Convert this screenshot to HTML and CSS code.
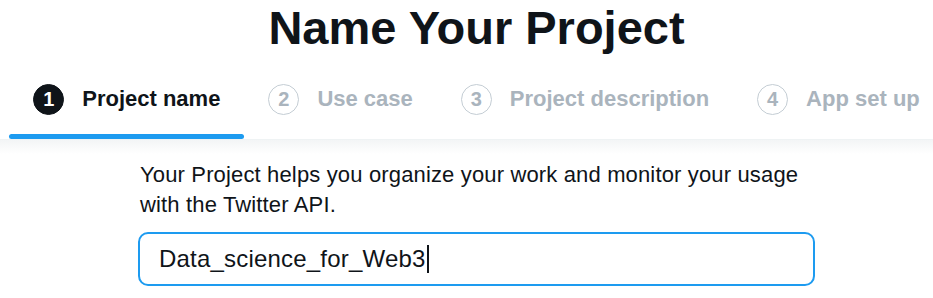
FILE: index.html
```html
<!DOCTYPE html>
<html lang="en">
<head>
  <meta charset="UTF-8" />
  <meta name="viewport" content="width=device-width, initial-scale=1.0" />
  <title>Name Your Project</title>
  <link rel="stylesheet" href="styles.css">
</head>
<body>
  <div class="page">
    <h1>Name Your Project</h1>

    <div class="steps">
      <div class="step active">
        <div class="step-label"><span class="step-num">1</span>Project name</div>
        <div class="step-bar"></div>
      </div>
      <div class="step">
        <div class="step-label"><span class="step-num">2</span>Use case</div>
        <div class="step-bar"></div>
      </div>
      <div class="step">
        <div class="step-label"><span class="step-num">3</span>Project description</div>
        <div class="step-bar"></div>
      </div>
      <div class="step">
        <div class="step-label"><span class="step-num">4</span>App set up</div>
        <div class="step-bar"></div>
      </div>
    </div>

    <div class="step-body">
      <div class="form">
        <p class="hint">Your Project helps you organize your work and monitor your usage with the Twitter API.</p>
        <div class="name-field">Data_science_for_Web3<span class="caret"></span></div>
      </div>
    </div>
  </div>
</body>
</html>
```

FILE: styles.css
```css
body {
  margin: 0;
  font-family: "Liberation Sans", Arial, sans-serif;
  color: #0f1419;
  background: #fff;
  overflow: hidden;
}
.page {
  width: 953px;
}
h1 {
  margin: 0 0 4px;
  font-size: 47px;
  line-height: 56px;
  font-weight: 700;
  text-align: center;
}
.steps {
  display: flex;
  justify-content: center;
  border-bottom: 1px solid #eff3f4;
}
.step {
  display: flex;
  flex-direction: column;
  padding-top: 24px;
  flex-shrink: 0;
}
.step-label {
  display: flex;
  align-items: center;
  gap: 18px;
  height: 30px;
  padding: 0 24px;
  font-size: 22px;
  font-weight: 700;
  color: #aab4bd;
  white-space: nowrap;
}
.step-num {
  width: 29px;
  height: 29px;
  border: 1px solid #c4cdd4;
  border-radius: 50%;
  display: flex;
  align-items: center;
  justify-content: center;
  font-size: 20px;
}
.step-bar {
  height: 5px;
  margin-top: 20px;
  border-radius: 3px;
}
.active .step-label {
  color: #0f1419;
}
.active .step-num {
  background: #0f1419;
  border-color: #0f1419;
  color: #fff;
}
.active .step-bar {
  background: #1d9bf0;
}
.step-body {
  background: linear-gradient(to bottom, #f3f5f6, #fff 14px);
  padding-top: 20px;
  display: flex;
  justify-content: center;
}
.form {
  width: 677px;
}
.hint {
  margin: 0 0 12px 2px;
  font-size: 22px;
  letter-spacing: 0.15px;
  line-height: 30px;
}
.name-field {
  height: 54px;
  box-sizing: border-box;
  border: 2px solid #1d9bf0;
  border-radius: 10px;
  padding-left: 19px;
  display: flex;
  align-items: center;
  font-size: 24px;
  letter-spacing: 0.2px;
}
.caret {
  display: inline-block;
  width: 2px;
  height: 28px;
  margin-left: 1px;
  background: #0f1419;
}
```
